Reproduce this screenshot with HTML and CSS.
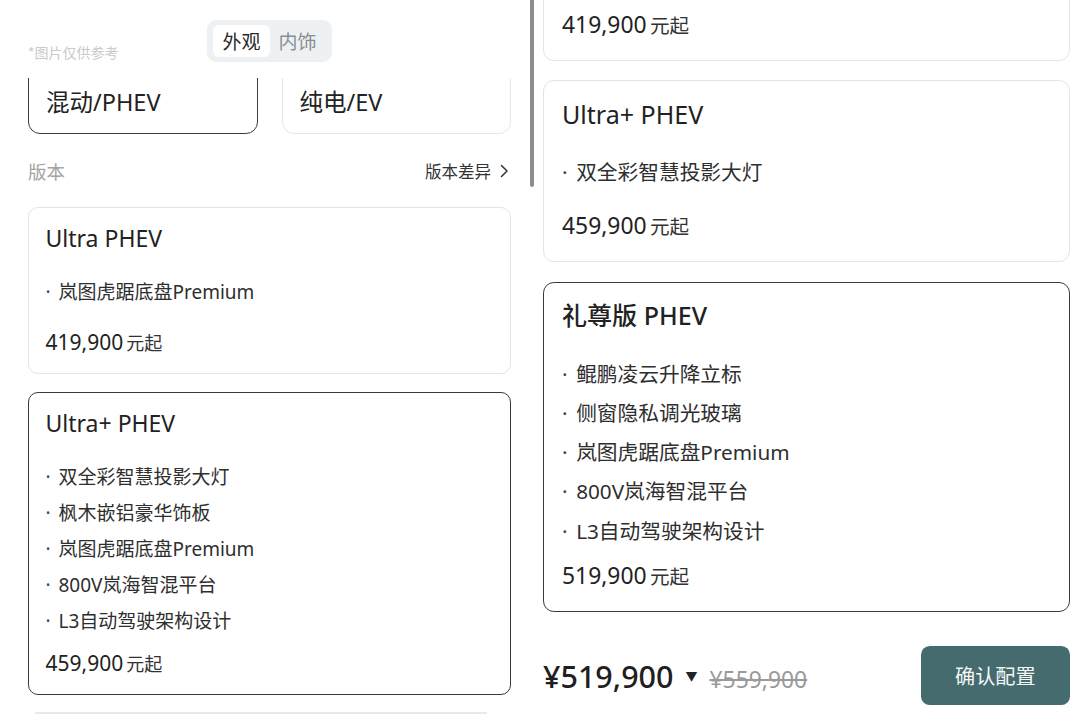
FILE: index.html
```html
<!DOCTYPE html>
<html lang="zh-CN">
<head>
<meta charset="utf-8">
<title>版本选择</title>
<link rel="stylesheet" href="styles.css">
</head>
<body>
<div class="page">
  <section class="screen screen--left">
    <header class="gallery-bar">
      <span class="gallery-bar__note">*图片仅供参考</span>
      <div class="view-toggle">
        <span class="view-toggle__btn is-active">外观</span>
        <span class="view-toggle__btn">内饰</span>
      </div>
    </header>
    <div class="powertrain">
      <div class="power-card is-active">混动/PHEV</div>
      <div class="power-card">纯电/EV</div>
    </div>
    <div class="section-head">
      <span class="section-head__title">版本</span>
      <span class="section-head__link">版本差异
        <svg class="chev" width="9" height="14" viewBox="0 0 9 14"><path d="M1.5 1.5 7 7l-5.5 5.5" fill="none" stroke="#333" stroke-width="1.5" stroke-linecap="round" stroke-linejoin="round"/></svg>
      </span>
    </div>
    <div class="trim-list">
      <article class="trim-card">
        <h3 class="trim-card__title">Ultra PHEV</h3>
        <ul class="trim-card__specs trim-card__specs--brief">
          <li>岚图虎踞底盘Premium</li>
        </ul>
        <p class="trim-card__price">419,900<span class="unit">元起</span></p>
      </article>
      <article class="trim-card is-active">
        <h3 class="trim-card__title">Ultra+ PHEV</h3>
        <ul class="trim-card__specs">
          <li>双全彩智慧投影大灯</li>
          <li>枫木嵌铝豪华饰板</li>
          <li>岚图虎踞底盘Premium</li>
          <li>800V岚海智混平台</li>
          <li>L3自动驾驶架构设计</li>
        </ul>
        <p class="trim-card__price">459,900<span class="unit">元起</span></p>
      </article>
      <div class="fade-edge"></div>
    </div>
  </section>

  <div class="scroll-track"><div class="scroll-track__thumb"></div></div>

  <section class="screen screen--right">
    <div class="scaled">
      <div class="trim-list trim-list--scrolled">
        <article class="trim-card">
          <h3 class="trim-card__title">Ultra PHEV</h3>
          <ul class="trim-card__specs trim-card__specs--brief">
            <li>岚图虎踞底盘Premium</li>
          </ul>
          <p class="trim-card__price">419,900<span class="unit">元起</span></p>
        </article>
        <article class="trim-card">
          <h3 class="trim-card__title">Ultra+ PHEV</h3>
          <ul class="trim-card__specs trim-card__specs--brief">
            <li>双全彩智慧投影大灯</li>
          </ul>
          <p class="trim-card__price">459,900<span class="unit">元起</span></p>
        </article>
        <article class="trim-card is-active">
          <h3 class="trim-card__title trim-card__title--cn">礼尊版 PHEV</h3>
          <ul class="trim-card__specs">
            <li>鲲鹏凌云升降立标</li>
            <li>侧窗隐私调光玻璃</li>
            <li>岚图虎踞底盘Premium</li>
            <li>800V岚海智混平台</li>
            <li>L3自动驾驶架构设计</li>
          </ul>
          <p class="trim-card__price">519,900<span class="unit">元起</span></p>
        </article>
      </div>
      <footer class="buy-bar">
        <div class="buy-bar__prices">
          <span class="buy-bar__total">¥519,900</span>
          <span class="buy-bar__arrow">▼</span>
          <span class="buy-bar__old">¥559,900</span>
        </div>
        <span class="buy-bar__btn">确认配置</span>
      </footer>
    </div>
  </section>
</div>
</body>
</html>
```

FILE: styles.css
```css
* { box-sizing: border-box; }
html, body {
  margin: 0;
  padding: 0;
  width: 1080px;
  height: 720px;
  overflow: hidden;
  background: #fff;
}
body {
  font-family: "Noto Sans", "Noto Sans CJK SC", sans-serif;
  color: #222;
}
h3, p, ul { margin: 0; padding: 0; }
ul { list-style: none; }

.page {
  display: flex;
  height: 720px;
}

.screen {
  height: 720px;
  overflow: hidden;
}
.screen--left {
  width: 530px;
  padding: 0 19px 0 28px;
}
.screen--right {
  flex: 1;
  padding: 0 10px 0 8px;
}

/* gallery header */
.gallery-bar {
  height: 78px;
  padding-top: 20px;
  display: grid;
  grid-template-columns: 1fr auto 1fr;
  align-items: start;
}
.gallery-bar__note {
  margin-top: 23px;
  font-family: "Noto Sans CJK SC", sans-serif;
  font-size: 14px;
  line-height: 19px;
  color: #cacaca;
}
.view-toggle {
  display: flex;
  padding: 5px 6px;
  background: #eef1f4;
  border-radius: 9px;
}
.view-toggle__btn {
  padding: 0 9px;
  height: 32px;
  line-height: 32px;
  font-family: "Noto Sans CJK SC", sans-serif;
  font-size: 19px;
  color: #8a8d91;
  border-radius: 6px;
}
.view-toggle__btn.is-active {
  background: #fff;
  color: #2a2a2a;
}

/* powertrain selector */
.powertrain {
  height: 56px;
  overflow: hidden;
  display: grid;
  grid-template-columns: 1fr 1fr;
  gap: 24px;
}
.power-card {
  margin-top: -12px;
  height: 68px;
  padding: 19.5px 17px 0;
  border: 1.5px solid #e6e6e6;
  border-radius: 12px;
  font-size: 23.5px;
  line-height: 30px;
  color: #222;
}
.power-card.is-active {
  border-color: #3c3c3c;
}

/* section heading */
.section-head {
  margin-top: 24px;
  margin-bottom: 23px;
  display: flex;
  justify-content: space-between;
  align-items: center;
  height: 26px;
}
.section-head__title {
  font-family: "Noto Sans CJK SC", sans-serif;
  font-size: 18.5px;
  color: #a3a3a3;
}
.section-head__link {
  display: flex;
  align-items: center;
  gap: 9px;
  font-family: "Noto Sans CJK SC", sans-serif;
  font-size: 16.5px;
  color: #333;
}
.chev { display: block; margin-right: 2px; }

/* trims */
.trim-list {
  display: flex;
  flex-direction: column;
  gap: 18px;
}
.trim-card {
  border: 1.5px solid #e4e4e4;
  border-radius: 10px;
  padding: 16px 16.5px 15.5px;
}
.trim-card.is-active {
  border-color: #3a3a3a;
}
.trim-card__title {
  font-size: 23px;
  line-height: 28px;
  font-weight: 400;
  color: #222;
  margin-bottom: 22px;
}
.trim-card__title--cn {
  font-weight: 500;
}
.trim-card__specs li {
  font-size: 19px;
  line-height: 36px;
  color: #2e2e2e;
  white-space: nowrap;
}
.trim-card__specs li::before {
  content: "·";
  display: inline-block;
  width: 13px;
  color: #444;
}
.trim-card__specs--brief {
  padding-bottom: 8px;
}
.trim-card__price {
  margin-top: 8.5px;
  font-size: 21px;
  line-height: 30px;
  color: #222;
}
.trim-card__price .unit {
  margin-left: 3px;
  font-size: 18px;
  color: #333;
}
.fade-edge {
  height: 2px;
  margin: -1px 24px 0 7px;
  background: #e9e9e9;
}

/* scrollbar between shots */
.scroll-track {
  width: 5px;
  height: 720px;
}
.scroll-track__thumb {
  width: 4px;
  height: 187px;
  background: #8d8d8d;
  border-radius: 0 0 2px 2px;
}

/* right screen */
.scaled {
  zoom: 1.09;
}
.trim-list--scrolled {
  margin-top: -111px;
}

.buy-bar {
  margin-top: 32px;
  height: 54px;
  display: flex;
  align-items: center;
  justify-content: space-between;
}
.buy-bar__prices {
  display: flex;
  align-items: baseline;
}
.buy-bar__total {
  font-size: 28px;
  color: #1f1f1f;
  font-weight: 500;
}
.buy-bar__arrow {
  font-size: 11px;
  margin: 0 11px 0 11px;
  color: #222;
  position: relative;
  top: -6px;
}
.buy-bar__old {
  font-size: 21px;
  color: #9a9a9a;
  text-decoration: line-through;
}
.buy-bar__btn {
  width: 137px;
  height: 54px;
  border-radius: 8px;
  background: #466b6f;
  color: #f4f7f7;
  font-family: "Noto Sans CJK SC", sans-serif;
  font-size: 18.5px;
  display: flex;
  align-items: center;
  justify-content: center;
}
```
